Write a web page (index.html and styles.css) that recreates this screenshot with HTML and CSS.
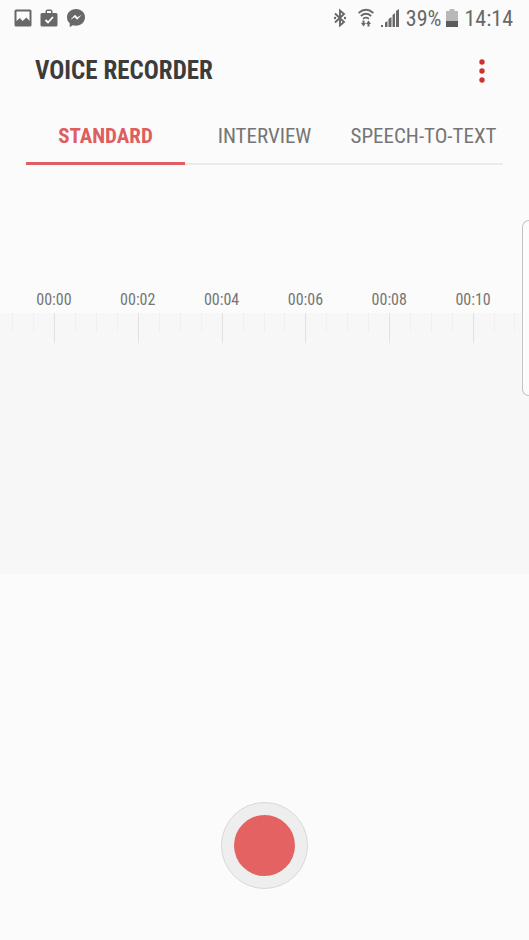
FILE: index.html
```html
<!DOCTYPE html>
<html lang="en">
<head>
<meta charset="utf-8">
<meta name="viewport" content="width=device-width, initial-scale=1">
<title>Voice Recorder</title>
<link rel="stylesheet" href="styles.css">
</head>
<body>
<div class="status-bar">
  <div class="status-group notices">
    <svg width="18" height="18" viewBox="0 0 18 18" aria-hidden="true"><path fill="#686868" fill-rule="evenodd" d="M2 .5h14a1.500 1.500 0 0 1 1.500 1.500v14a1.500 1.500 0 0 1-1.500 1.500H2A1.500 1.500 0 0 1 .5 16V2A1.500 1.500 0 0 1 2 .5zM2.500 2.500v9.500l3.500-3 2.500 3L12.500 8.500l3 3.500V2.500z"/></svg>
    <svg width="18" height="18" viewBox="0 0 18 18" aria-hidden="true"><path fill="#686868" fill-rule="evenodd" d="M5.500 4V2.500A2 2 0 0 1 7.500.5h3a2 2 0 0 1 2 2V4H16a1.500 1.500 0 0 1 1.500 1.500V16a1.500 1.500 0 0 1-1.500 1.500H2A1.500 1.500 0 0 1 .5 16V5.500A1.500 1.500 0 0 1 2 4zM7 4h4V2H7z"/><path d="M5.500 11l2.500 2.500L13 8" fill="none" stroke="#fff" stroke-width="1.800"/></svg>
    <svg width="20" height="20" viewBox="0 0 20 20" aria-hidden="true"><path fill="#686868" d="M10 1C4.800 1 1 4.600 1 9.300c0 2.500 1 4.500 2.700 6V19l3.200-1.700c1 .3 2 .4 3.100.4 5.200 0 9-3.700 9-8.400S15.200 1 10 1z"/><path fill="#fff" d="M4.300 11.700L9 6.800l2.500 2.400 4.300-2.400-4.700 4.900-2.400-2.400z"/></svg>
  </div>
  <div class="status-group">
    <svg class="bluetooth" width="14" height="20" viewBox="0 0 14 20" aria-hidden="true"><path d="M2 5.500l9 8.500L7 17.500v-15L11 6l-9 8.500" fill="none" stroke="#686868" stroke-width="1.900"/><circle cx="2" cy="10" r="1.200" fill="#686868"/><circle cx="12" cy="10" r="1.200" fill="#686868"/></svg>
    <svg class="wifi" width="16" height="20" viewBox="0 0 16 20" aria-hidden="true"><g fill="none" stroke="#686868" stroke-width="1.700"><path d="M.6 5q7.400-6.500 14.800 0M2.800 8q5.200-4.500 10.400 0M5 10.800q3-2.500 6 0"/></g><path fill="#686868" d="M4.500 12.500h2V15h1.500l-2.500 3.500L3 15h1.500zM9.500 18.500V16H8l2.500-3.500L13 16h-1.500v2.500z"/></svg>
    <svg class="signal" width="18" height="18" viewBox="0 0 18 18" aria-hidden="true"><path fill="#686868" d="M0 16h2v2H0zM4 13.500L6.500 12v6H4zM7.500 10L10.500 8v10h-3zM11.500 6L14 4v14h-2.500zM15 2l3-2v18h-3z"/></svg>
    <span>39%</span>
    <svg class="battery" width="12" height="18" viewBox="0 0 12 18" aria-hidden="true"><path fill="#b8b8b8" d="M3.500 0h5v2H12v10H0V2h3.500z"/><path fill="#5c5c5c" d="M0 12h12v6H0z"/></svg>
    <time>14:14</time>
  </div>
</div>
<header class="app-bar">
  <h1>VOICE RECORDER</h1>
  <button class="more" type="button" aria-label="More options"><svg width="8" height="26" viewBox="0 0 8 26" aria-hidden="true"><g fill="#cd342f"><circle cx="4" cy="4" r="2.700"/><circle cx="4" cy="13" r="2.700"/><circle cx="4" cy="22" r="2.700"/></g></svg></button>
</header>
<nav class="tabs">
  <a class="tab active" href="#standard" aria-current="page">STANDARD</a>
  <a class="tab" href="#interview">INTERVIEW</a>
  <a class="tab" href="#speech">SPEECH-TO-TEXT</a>
</nav>
<main>
  <section class="timeline">
    <div class="times"><span>00:00</span><span>00:02</span><span>00:04</span><span>00:06</span><span>00:08</span><span>00:10</span></div>
    <div class="track">
      <div class="ruler">
        <div class="ticks"><i></i><i></i><i class="major"></i><i></i></div>
        <div class="ticks"><i></i><i></i><i class="major"></i><i></i></div>
        <div class="ticks"><i></i><i></i><i class="major"></i><i></i></div>
        <div class="ticks"><i></i><i></i><i class="major"></i><i></i></div>
        <div class="ticks"><i></i><i></i><i class="major"></i><i></i></div>
        <div class="ticks"><i></i><i></i><i class="major"></i><i class="last"></i></div>
      </div>
    </div>
    <div class="edge-handle"></div>
  </section>
  <div class="controls">
    <button class="record" type="button" aria-label="Record"><span class="record-dot"></span></button>
  </div>
</main>
</body>
</html>
```
FILE: styles.css
```css
* { box-sizing: border-box; }

body {
  margin: 0;
  min-height: 100vh;
  display: flex;
  flex-direction: column;
  overflow-x: hidden;
  background: #fbfbfb;
  color: #757575;
  font-family: "Roboto Condensed", "Liberation Sans Narrow", Roboto, sans-serif;
}

svg { display: block; }

.status-bar {
  height: 36px;
  padding: 0 16px 0 14px;
  display: flex;
  align-items: center;
  justify-content: space-between;
  color: #686868;
  font-size: 22px;
}

.status-group { display: flex; align-items: center; }
.notices { gap: 8px; }
.bluetooth { margin-right: 11px; }
.wifi { margin-right: 7px; }
.signal { margin-right: 7px; }
.battery { margin: 0 6px 0 5px; }

.app-bar {
  height: 70px;
  padding: 0 43px 0 35px;
  display: flex;
  align-items: center;
  justify-content: space-between;
}

h1 {
  margin: 0;
  color: #3c3c3c;
  font-size: 25px;
  line-height: 30px;
}

button { padding: 0; border: 0; background: none; }

.tabs {
  margin: 0 26px;
  display: grid;
  grid-template-columns: repeat(3, 1fr);
  box-shadow: inset 0 -2px #ebebeb;
}

.tab {
  height: 59px;
  padding-top: 4px;
  display: flex;
  justify-content: center;
  align-items: center;
  border-bottom: 3px solid transparent;
  color: #757575;
  font-size: 21px;
  text-decoration: none;
  white-space: nowrap;
}

.tab.active {
  color: #de5e60;
  font-weight: 700;
  border-color: #de6062;
}

main { flex: 1; display: flex; flex-direction: column; }

.timeline { position: relative; padding-top: 124px; }

.times, .ruler {
  margin: 0 14px 0 12px;
  display: grid;
  grid-template-columns: repeat(6, 1fr);
}

.times {
  height: 24px;
  line-height: 22px;
  font-size: 16px;
  text-align: center;
}

.track { height: 261px; background: #f7f7f7; }

.ticks { display: grid; grid-template-columns: repeat(4, 1fr); }
.ticks i { height: 19px; border-left: 1px solid #f0f0f0; }
.ticks .major { height: 30px; border-color: #e2e2e2; }
.ticks .last { border-right: 1px solid #f0f0f0; }

.edge-handle {
  position: absolute;
  top: 55px;
  right: 0;
  width: 7px;
  height: 176px;
  border: 1px solid #c4c4c4;
  border-right: 0;
  border-radius: 7px 0 0 7px;
  background: #fcfcfc;
}

.controls {
  flex: 1;
  display: flex;
  justify-content: center;
  align-items: flex-end;
  padding-bottom: 51px;
}

.record {
  width: 87px;
  height: 87px;
  display: grid;
  place-items: center;
  border: 1px solid #d8d8d8;
  border-radius: 50%;
  background: #eeeeee;
}

.record-dot {
  width: 61px;
  height: 61px;
  border-radius: 50%;
  background: #e46262;
}
```
